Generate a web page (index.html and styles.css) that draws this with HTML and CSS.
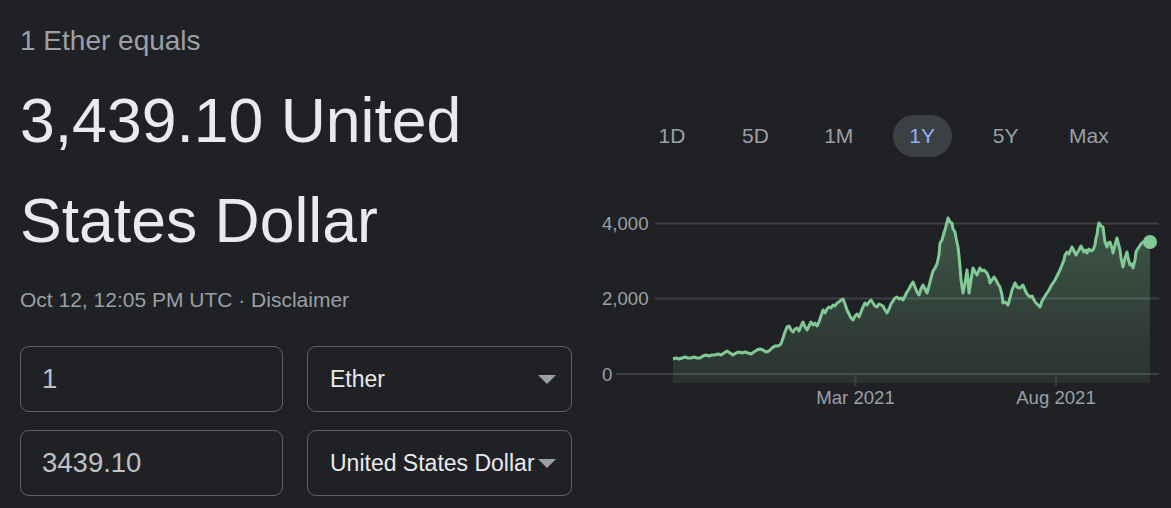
FILE: index.html
```html
<!DOCTYPE html>
<html lang="en">
<head>
    <meta charset="UTF-8">
    <title>Ether to United States Dollar</title>
    <link rel="stylesheet" href="styles.css">
</head>
<body>
    <div class="page">
        <!--left: result and converter fields-->
        <div class="converter">
            <div class="lead">1 Ether equals</div>
            <div class="result">3,439.10 United States Dollar</div>
            <div class="stamp">Oct 12, 12:05 PM UTC · Disclaimer</div>
            <div class="fields">
                <div class="field field-value">1</div>
                <div class="field field-select"><span>Ether</span><span class="caret"></span></div>
                <div class="field field-value">3439.10</div>
                <div class="field field-select"><span>United States Dollar</span><span class="caret"></span></div>
            </div>
        </div>
        <!--right: range buttons and chart-->
        <div class="chart">
            <div class="ranges">
                <div class="range">1D</div>
                <div class="range">5D</div>
                <div class="range">1M</div>
                <div class="range active">1Y</div>
                <div class="range">5Y</div>
                <div class="range">Max</div>
            </div>
            <svg class="plot" width="581" height="220" viewBox="590 200 581 220">
                <defs>
                    <linearGradient id="area" x1="0" y1="218" x2="0" y2="383" gradientUnits="userSpaceOnUse">
                        <stop offset="0" stop-color="#81c995" stop-opacity="0.32"/>
                        <stop offset="1" stop-color="#81c995" stop-opacity="0.1"/>
                    </linearGradient>
                </defs>
                <!--grid-->
                <line class="grid" x1="655" y1="223.5" x2="1159" y2="223.5"/>
                <line class="grid" x1="655" y1="298.5" x2="1159" y2="298.5"/>
                <line class="grid" x1="616" y1="374" x2="1159" y2="374"/>
                <text class="axis" x="602" y="230">4,000</text>
                <text class="axis" x="602" y="305">2,000</text>
                <text class="axis" x="602" y="381">0</text>
                <!--area and line-->
                <polygon fill="url(#area)" points="673,359 676,358 679,359 682,358 685,357 688,358 691,358 694,357 697,358 700,358 703,356 706,355 709,356 712,355 715,355 718,354 721,355 724,353 727,351 730,353 733,355 736,353 739,352 742,353 745,352 748,353 751,354 754,352 757,350 760,349 763,350 766,352 769,351 772,348 775,346 778,346 781,344 783,338 785,332 787,327 789,326 791,330 793,332 795,329 797,328 799,331 801,326 803,322 805,327 807,330 809,326 811,322 813,325 815,323 817,326 819,322 821,316 823,310 825,313 827,309 829,307 831,308 833,305 835,306 837,303 839,302 841,300 843,299 845,304 847,310 849,314 851,318 853,320 855,316 857,314 859,317 861,312 863,307 865,303 867,305 869,302 871,300 873,303 875,306 877,307 879,304 881,305 883,306 885,310 887,313 889,309 891,304 893,301 895,298 897,297 899,299 901,298 903,300 905,296 907,292 909,289 911,285 913,282 915,287 917,292 919,295 921,289 923,285 925,289 927,293 929,286 931,278 933,271 935,268 937,264 939,255 940,243 942,240 944,233 945,230 947,222 948,218 950,222 952,223 953,229 955,232 956,238 958,247 959,256 960,267 961,280 963,293 965,283 967,270 968,280 969,293 971,280 973,268 975,272 977,275 979,270 980,268 982,271 984,270 986,272 987,273 989,278 990,283 992,280 994,277 996,280 998,284 1000,287 1002,295 1003,303 1005,302 1008,305 1010,298 1012,290 1015,283 1017,287 1020,288 1022,286 1023,285 1025,290 1027,294 1030,297 1032,296 1034,300 1036,303 1038,305 1040,307 1042,301 1045,296 1047,293 1049,290 1051,286 1053,283 1055,280 1057,276 1060,270 1062,265 1064,260 1065,255 1067,252 1069,254 1071,249 1072,247 1074,251 1076,255 1077,253 1079,250 1081,246 1082,248 1084,252 1086,250 1087,253 1089,249 1091,251 1093,250 1095,245 1096,238 1097,235 1098,227 1099,223 1101,226 1103,227 1104,235 1105,242 1107,247 1108,243 1110,242 1112,248 1113,253 1115,245 1117,238 1118,242 1120,250 1121,258 1123,267 1125,258 1127,252 1128,258 1130,265 1132,264 1133,268 1135,260 1136,252 1137,250 1139,247 1141,244 1143,242 1146,241 1148,240 1150,242 1150,383 673,383"/>
                <polyline class="price" points="673,359 676,358 679,359 682,358 685,357 688,358 691,358 694,357 697,358 700,358 703,356 706,355 709,356 712,355 715,355 718,354 721,355 724,353 727,351 730,353 733,355 736,353 739,352 742,353 745,352 748,353 751,354 754,352 757,350 760,349 763,350 766,352 769,351 772,348 775,346 778,346 781,344 783,338 785,332 787,327 789,326 791,330 793,332 795,329 797,328 799,331 801,326 803,322 805,327 807,330 809,326 811,322 813,325 815,323 817,326 819,322 821,316 823,310 825,313 827,309 829,307 831,308 833,305 835,306 837,303 839,302 841,300 843,299 845,304 847,310 849,314 851,318 853,320 855,316 857,314 859,317 861,312 863,307 865,303 867,305 869,302 871,300 873,303 875,306 877,307 879,304 881,305 883,306 885,310 887,313 889,309 891,304 893,301 895,298 897,297 899,299 901,298 903,300 905,296 907,292 909,289 911,285 913,282 915,287 917,292 919,295 921,289 923,285 925,289 927,293 929,286 931,278 933,271 935,268 937,264 939,255 940,243 942,240 944,233 945,230 947,222 948,218 950,222 952,223 953,229 955,232 956,238 958,247 959,256 960,267 961,280 963,293 965,283 967,270 968,280 969,293 971,280 973,268 975,272 977,275 979,270 980,268 982,271 984,270 986,272 987,273 989,278 990,283 992,280 994,277 996,280 998,284 1000,287 1002,295 1003,303 1005,302 1008,305 1010,298 1012,290 1015,283 1017,287 1020,288 1022,286 1023,285 1025,290 1027,294 1030,297 1032,296 1034,300 1036,303 1038,305 1040,307 1042,301 1045,296 1047,293 1049,290 1051,286 1053,283 1055,280 1057,276 1060,270 1062,265 1064,260 1065,255 1067,252 1069,254 1071,249 1072,247 1074,251 1076,255 1077,253 1079,250 1081,246 1082,248 1084,252 1086,250 1087,253 1089,249 1091,251 1093,250 1095,245 1096,238 1097,235 1098,227 1099,223 1101,226 1103,227 1104,235 1105,242 1107,247 1108,243 1110,242 1112,248 1113,253 1115,245 1117,238 1118,242 1120,250 1121,258 1123,267 1125,258 1127,252 1128,258 1130,265 1132,264 1133,268 1135,260 1136,252 1137,250 1139,247 1141,244 1143,242 1146,241 1148,240 1150,242"/>
                <circle class="dot" cx="1150" cy="242" r="7"/>
                <!--x axis-->
                <line class="tick" x1="855.5" y1="374" x2="855.5" y2="386"/>
                <line class="tick" x1="1056" y1="374" x2="1056" y2="386"/>
                <text class="axis" x="855.5" y="404" text-anchor="middle">Mar 2021</text>
                <text class="axis" x="1056" y="404" text-anchor="middle">Aug 2021</text>
            </svg>
        </div>
    </div>
</body>
</html>
```

FILE: styles.css
```css
*{
    margin:0;
    padding:0;
    box-sizing:border-box;
}
body{
    background-color:#202124;
    font-family:"Liberation Sans", Arial, sans-serif;
    width:1171px;
    height:508px;
    overflow:hidden;
}
.page{
    display:flex;
}
/*left column*/
.converter{
    width:590px;
    padding:23px 0 0 20px;
}
.lead{
    font-size:28px;
    line-height:36px;
    color:#9aa0a6;
    margin-bottom:11px;
}
.result{
    font-size:62.5px;
    line-height:100px;
    color:#e8eaed;
}
.stamp{
    font-size:21px;
    line-height:28px;
    color:#9aa0a6;
    margin-top:16px;
}
.fields{
    display:grid;
    grid-template-columns:263px 265px;
    gap:18px 24px;
    margin-top:32px;
}
.field{
    height:66px;
    border:1px solid #5f6368;
    border-radius:9px;
    display:flex;
    align-items:center;
}
.field-value{
    padding-left:21px;
    font-size:27.5px;
    color:#bdc1c6;
}
.field-select{
    justify-content:space-between;
    padding:0 15px 0 22px;
    font-size:23px;
    color:#e8eaed;
}
/*dropdown arrow*/
.caret{
    flex-shrink:0;
    width:0;
    height:0;
    border-left:9px solid transparent;
    border-right:9px solid transparent;
    border-top:9px solid #9aa0a6;
}
/*right column*/
.chart{
    width:581px;
    padding-top:115px;
}
.ranges{
    display:flex;
    gap:24.4px;
    padding-left:52.5px;
}
.range{
    width:59px;
    height:42px;
    border-radius:21px;
    display:flex;
    align-items:center;
    justify-content:center;
    font-size:21px;
    color:#9aa0a6;
}
.range.active{
    background-color:#3c4043;
    color:#8ab4f8;
}
.plot{
    display:block;
    margin-top:43px;
}
.grid{
    stroke:#3c4043;
    stroke-width:2;
}
.tick{
    stroke:#3c4043;
    stroke-width:2;
}
.axis{
    font-size:18.6px;
    fill:#9aa0a6;
}
.price{
    fill:none;
    stroke:#81c995;
    stroke-width:3;
    stroke-linejoin:round;
}
.dot{
    fill:#81c995;
}
```
